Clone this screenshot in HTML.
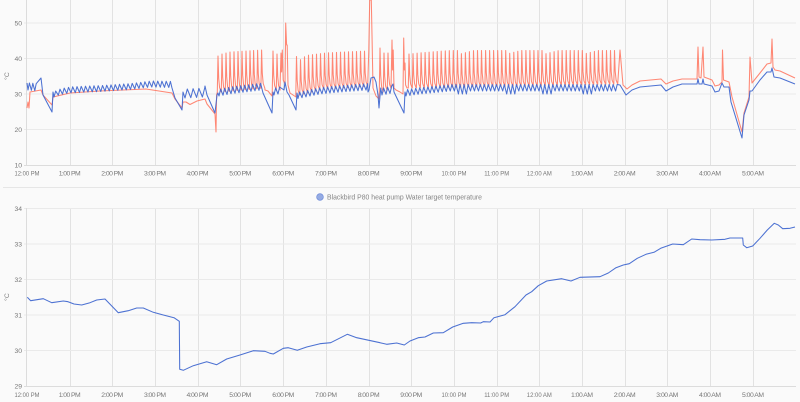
<!DOCTYPE html>
<html>
<head>
<meta charset="utf-8">
<style>
html,body{margin:0;padding:0;background:#fafafa;width:800px;height:402px;overflow:hidden}
svg{display:block;position:absolute;left:0;top:0;filter:blur(.25px)}
text{font-family:"Liberation Sans",sans-serif;font-size:6.8px;fill:#787878}
.g{stroke:#e2e2e2;stroke-width:1;fill:none}
.gh{stroke:#eaeaea;stroke-width:1;fill:none}
.a{stroke:#dcdcdc;stroke-width:1;fill:none}
.l{fill:none;stroke-width:1.05;stroke-linejoin:round}
</style>
</head>
<body>
<svg width="800" height="402" viewBox="0 0 800 402" xmlns="http://www.w3.org/2000/svg">
<g id="grid"></g>
<path stroke="#e6e6e6" fill="none" d="M3 187.5H800"/>

<path id="red" class="l" stroke="#ff725c" stroke-opacity=".85" d=""/>
<path id="blue" class="l" stroke="#4269d0" stroke-opacity=".95" d=""/>

<path class="l" stroke="#4269d0" stroke-opacity=".95" d="M27.3 297.3L30.7 300.7L43.3 298.7L51.7 302.7L63.3 301L68 301.7L74 304L81.7 305L90 302.7L96.7 300L105 299L118.3 312.7L128.3 310.7L136.7 308L143.3 308L153.3 312.3L163.3 315L174 317.7L179.3 321.3L179.7 369.3L183.3 370.3L193.3 365.7L206.7 361.7L216.7 364.7L226.7 359L240 355L253.3 350.7L265 351.3L270 353.3L273.3 354L283.3 348.3L288.3 347.7L297.3 350.3L306.7 347L320 343.7L330.7 342.7L347.3 334.3L356.7 337.7L380 342.7L386.7 344.3L396.7 343L404.3 345L410 341L418.3 337.7L425 337L433.3 333L443.3 332.7L452.7 327L463.3 323.3L471.7 322.7L480.7 323L483.3 321.7L490 322L494 317.7L505 314.7L515 306.7L526 295L531.7 291.7L538.3 285.7L546.7 281L561.7 278.7L571 281L580 277.3L600 276.7L608.3 273L616 267.7L623.3 265L629.3 263.7L637.3 258.3L646 254.3L654 252.3L660.7 248.3L672.7 244L683.3 244.7L691.7 239L700 239.7L711.7 240L725 239.3L730 238L742.7 238L743.3 245L746.7 247.7L752.7 246L760 238.3L767.3 230L774.3 223.3L778.3 225L782.7 228.7L790 228.3L795 227"/>

<g text-anchor="end">
<text x="22" y="25.5">50</text><text x="22" y="61">40</text><text x="22" y="96.5">30</text><text x="22" y="132">20</text><text x="22" y="167.5">10</text>
<text x="22" y="211">34</text><text x="22" y="246.5">33</text><text x="22" y="282">32</text><text x="22" y="317.5">31</text><text x="22" y="353">30</text><text x="22" y="388.5">29</text>
</g>
<text transform="translate(9 76) rotate(-90)" text-anchor="middle">°C</text>
<text transform="translate(9 297) rotate(-90)" text-anchor="middle">°C</text>

<g text-anchor="middle">
<text x="27" y="175.5" textLength="25" lengthAdjust="spacingAndGlyphs">12:00 PM</text>
<text x="69.7" y="175.5" textLength="22">1:00 PM</text>
<text x="112.3" y="175.5" textLength="22">2:00 PM</text>
<text x="155" y="175.5" textLength="22">3:00 PM</text>
<text x="197.5" y="175.5" textLength="22">4:00 PM</text>
<text x="240.3" y="175.5" textLength="22">5:00 PM</text>
<text x="283.3" y="175.5" textLength="22">6:00 PM</text>
<text x="326" y="175.5" textLength="22">7:00 PM</text>
<text x="368.7" y="175.5" textLength="22">8:00 PM</text>
<text x="411.3" y="175.5" textLength="22">9:00 PM</text>
<text x="454" y="175.5" textLength="25" lengthAdjust="spacingAndGlyphs">10:00 PM</text>
<text x="496.7" y="175.5" textLength="25" lengthAdjust="spacingAndGlyphs">11:00 PM</text>
<text x="539.3" y="175.5" textLength="25" lengthAdjust="spacingAndGlyphs">12:00 AM</text>
<text x="582" y="175.5" textLength="22">1:00 AM</text>
<text x="624.7" y="175.5" textLength="22">2:00 AM</text>
<text x="667.3" y="175.5" textLength="22">3:00 AM</text>
<text x="710" y="175.5" textLength="22">4:00 AM</text>
<text x="753" y="175.5" textLength="22">5:00 AM</text>

<text x="27" y="397" textLength="25" lengthAdjust="spacingAndGlyphs">12:00 PM</text>
<text x="69.7" y="397" textLength="22">1:00 PM</text>
<text x="112.3" y="397" textLength="22">2:00 PM</text>
<text x="155" y="397" textLength="22">3:00 PM</text>
<text x="197.5" y="397" textLength="22">4:00 PM</text>
<text x="240.3" y="397" textLength="22">5:00 PM</text>
<text x="283.3" y="397" textLength="22">6:00 PM</text>
<text x="326" y="397" textLength="22">7:00 PM</text>
<text x="368.7" y="397" textLength="22">8:00 PM</text>
<text x="411.3" y="397" textLength="22">9:00 PM</text>
<text x="454" y="397" textLength="25" lengthAdjust="spacingAndGlyphs">10:00 PM</text>
<text x="496.7" y="397" textLength="25" lengthAdjust="spacingAndGlyphs">11:00 PM</text>
<text x="539.3" y="397" textLength="25" lengthAdjust="spacingAndGlyphs">12:00 AM</text>
<text x="582" y="397" textLength="22">1:00 AM</text>
<text x="624.7" y="397" textLength="22">2:00 AM</text>
<text x="667.3" y="397" textLength="22">3:00 AM</text>
<text x="710" y="397" textLength="22">4:00 AM</text>
<text x="753" y="397" textLength="22">5:00 AM</text>
</g>

<circle cx="320" cy="197" r="3.4" fill="#4269d0" fill-opacity=".55" stroke="#4269d0" stroke-opacity=".6" stroke-width=".7"/>
<text x="327" y="199.5" textLength="155" lengthAdjust="spacingAndGlyphs" style="font-size:7px;fill:#858585">Blackbird P80 heat pump Water target temperature</text>
</svg>
<script>
(function(){
var g=document.getElementById('grid'),s='';
var xs=[69.7,112.3,155,197.5,240.3,283.3,326,368.7,411.3,454,496.7,539.3,582,624.7,667.3,710,753];
xs.forEach(function(x){x=Math.round(x)+.5;s+='<path class="g" d="M'+x+' 0V165M'+x+' 208V386"/>';});
[23,58.5,94,129.5].forEach(function(y){s+='<path class="gh" d="M24 '+y+'H796"/>';});
[208.5,244,279.5,315,350.5].forEach(function(y){s+='<path class="gh" d="M24 '+y+'H796"/>';});
s+='<path class="a" d="M24 165.5H796M24 386.5H796M26.5 0V165M26.5 208V386"/>';
g.innerHTML=s;
function lerp(t,x){
  if(x<=t[0][0])return t[0][1];
  for(var i=1;i<t.length;i++){if(x<=t[i][0]){var a=t[i-1],b=t[i];return a[1]+(b[1]-a[1])*(x-a[0])/(b[0]-a[0]);}}
  return t[t.length-1][1];
}
var R=[],B=[];
function add(A,l){l.forEach(function(p){A.push(p);});}
function saw(x0,x1,step,hi,d){
  for(var x=x0;x<=x1;x+=step){
    var h=lerp(hi,x),dd=typeof d==='function'?d(x):d;
    B.push([x,h+dd]);B.push([x+step*.4,h]);
  }
}
function spikes(list,pk,base){
  list.forEach(function(x){
    var b=lerp(base,x),p=pk(x);
    R.push([x-.7,b]);R.push([x,p]);R.push([x+.7,p+(b-p)*.62]);R.push([x+1.6,p+(b-p)*.88]);R.push([x+3.2,b]);
  });
}
function range(a,b,st){var o=[];for(var x=a;x<=b+.01;x+=st)o.push(x);return o;}

/* ---- RED ---- */
add(R,[[27,108],[28,102],[29,108],[30,92],[41,90],[43,95],[52,105],[53,97],[70,93],[100,91],[146,89],[172,93],[175,99],[182,108],[183,102],[186,102],[190,104.5],[197,101],[205,99],[207,104],[215,114],[216,132],[216.6,95]]);
spikes([218,222,226,230,234,238,242,246,250,253.6,257.6,261.6],function(x){return lerp([[218,56],[222,54],[230,52],[246,51],[262,50]],x);},[[218,92],[262,88]]);
add(R,[[265,90],[268,91],[272,96]]);
spikes([273,277],function(x){return lerp([[273,51],[277,54]],x);},[[273,90],[277,90]]);
add(R,[[280,88],[281,53],[281.6,72],[282.3,50],[283.2,80],[285,84],[285.7,23],[286.6,45],[287.2,45],[288,85],[290,93],[296,97]]);
spikes(range(296.5,368,4.0),function(x){return lerp([[296,56],[300,60],[304,57],[309,55],[325,53],[345,52],[368,51]],x);},[[296,95],[320,89],[368,86]]);
add(R,[[368.8,50],[369.7,0],[371.3,0],[372,35],[373,88],[376,96],[379,99]]);
spikes([380,384,388],function(x){return lerp([[380,48],[384,53],[388,53]],x);},[[380,92],[390,88]]);
add(R,[[391,88],[392,40],[392.6,70],[393.2,50],[394,88],[396,90],[400,92],[403,94],[403.7,38],[404.4,70],[405,63],[405.6,85],[407,88]]);
var rs=[460,507,545,584];
spikes(range(409,618,4.03),function(x){
  var v=50.5+lerp([[409,3.5],[430,1.5],[450,0]],x);
  rs.forEach(function(r){if(x>=r&&x<r+14)v=Math.max(v,54-(x-r)*.25);});
  return v;
},[[409,88],[618,84]]);
add(R,[[620,50],[623,85],[627,89],[632,85],[640,81],[661,79],[666,84],[673,81],[682,79],[697,79],[698,47],[699,77],[701,78],[703,47],[704,77],[712,80],[715,86],[719,85],[722,82],[722.5,50],[723.5,80],[729,82],[732,97],[742,132],[744,113],[749,97],[750,57],[752,83],[760,73],[767,64],[771,63],[772,39],[773,67],[775,70],[780,71],[795,78]]);

/* ---- BLUE ---- */
add(B,[[27,83]]);
saw(28,38,3.4,[[28,83],[38,84]],7);
add(B,[[41,78],[43,95],[52,112],[53,92]]);
saw(54,170,4.25,[[54,91],[60,88.5],[70,86.8],[100,85.5],[130,83.5],[150,81],[172,81.5]],6);
add(B,[[172,88],[175,98],[182,110],[183,92]]);
saw(185,203,5.8,[[185,89],[203,88]],9);
add(B,[[205,86],[207,95],[215,113],[217,95],[218,93]]);
saw(219,261,4,[[219,89],[232,86.5],[262,83]],7);
add(B,[[263,93],[272,113],[273,92]]);
saw(274,280,4,[[274,88],[280,86.5]],7);
add(B,[[284,90],[285,82],[287,92],[289,95],[296,110],[297,93]]);
saw(298,366,4,[[298,92],[320,87.5],[340,85.5],[367,83.5]],6.5);
add(B,[[368,92],[369,90],[371,78],[374,77],[376,82],[378,95],[379,108],[380.7,88]]);
saw(382,391,4,[[382,88],[392,86]],7);
add(B,[[393,84],[394,92],[404,113],[405,92]]);
saw(406,618,4.03,[[406,89.5],[420,87.5],[450,84.5],[620,84.5]],function(x){
  var d=6.5;
  [460,507,545,584].forEach(function(r){if(x>=r-2&&x<r+8)d=9.5;});
  return d;
});
add(B,[[620,85],[626,95],[632,90],[640,87],[661,85],[666,91],[673,87],[682,84],[697,84],[698,79],[699,84],[702,84],[703,79],[704,84],[712,86],[715,92],[719,91],[722,83],[724,87],[729,87],[731,102],[742,138],[744,115],[749,100],[750,91],[752,91],[760,80],[767,72],[771,72],[772,68],[774,77],[780,78],[795,84]]);

function P(a){return 'M'+a.map(function(p){return p[0].toFixed(1)+' '+p[1].toFixed(1);}).join('L');}
document.getElementById('red').setAttribute('d',P(R));
document.getElementById('blue').setAttribute('d',P(B));
})();
</script>
</body>
</html>
